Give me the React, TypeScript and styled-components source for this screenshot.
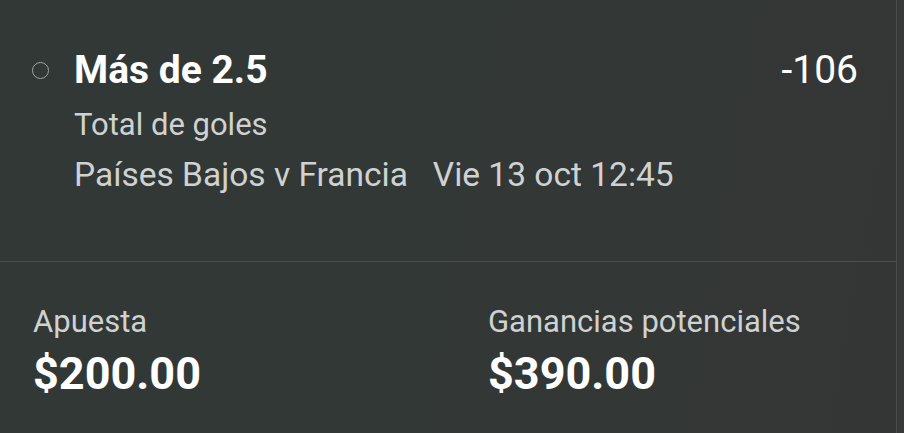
import React from 'react';
import styled, { createGlobalStyle } from 'styled-components';

const GlobalStyle = createGlobalStyle`
    html, body {
        margin: 0;
        padding: 0;
        background: #323836;
    }
    body {
        font-family: Roboto, "Noto Sans", sans-serif;
        -webkit-font-smoothing: antialiased;
    }
`;

const Slip = styled.div`
    width: 904px;
    height: 433px;
    display: flex;
    background: linear-gradient(100deg, #313836 0%, #323836 50%, #343635 100%);
    color: #fff;
    overflow: hidden;
`;

const Body = styled.div`
    flex: 1;
    display: flex;
    flex-direction: column;
`;

const Edge = styled.div`
    width: 7px;
    border-left: 1px solid #4a4d4c;
    background: #383a39;
`;

const Selection = styled.div`
    display: grid;
    grid-template-columns: 42px 1fr auto;
    padding: 47px 38px 0 32px;
    height: 262px;
    box-sizing: border-box;
    border-bottom: 1px solid #4b504e;
`;

const Radio = styled.span`
    width: 17px;
    height: 17px;
    margin-top: 15px;
    border: 1.6px solid #a3a6a5;
    border-radius: 50%;
    box-sizing: border-box;
`;

const Info = styled.div`
    display: flex;
    flex-direction: column;
`;

const Pick = styled.div`
    font-size: 39px;
    font-weight: 700;
    line-height: 46px;
    margin-bottom: 7px;
`;

const Meta = styled.div<{ size: number }>`
    font-size: ${({ size }) => size}px;
    line-height: 50px;
    color: #cfd2d1;
    white-space: pre;
`;

const Odds = styled.div`
    font-size: 39px;
    line-height: 46px;
`;

const Totals = styled.div`
    display: grid;
    grid-template-columns: 455px 1fr;
    padding: 42px 33px 0;
`;

const Figure = styled.div`
    display: flex;
    flex-direction: column;
`;

const Label = styled.div`
    font-size: 31px;
    line-height: 36px;
    color: #cfd2d1;
`;

const Amount = styled.div`
    font-size: 45px;
    font-weight: 700;
    line-height: 68px;
`;

export default function App() {
    return (
        <>
            <GlobalStyle />
            <Slip>
                <Body>
                    <Selection>
                        <Radio />
                        <Info>
                            <Pick>Más de 2.5</Pick>
                            <Meta size={31}>Total de goles</Meta>
                            <Meta size={33.5}>{'Países Bajos v Francia   Vie 13 oct 12:45'}</Meta>
                        </Info>
                        <Odds>-106</Odds>
                    </Selection>
                    <Totals>
                        <Figure>
                            <Label>Apuesta</Label>
                            <Amount>$200.00</Amount>
                        </Figure>
                        <Figure>
                            <Label>Ganancias potenciales</Label>
                            <Amount>$390.00</Amount>
                        </Figure>
                    </Totals>
                </Body>
                <Edge />
            </Slip>
        </>
    );
}
